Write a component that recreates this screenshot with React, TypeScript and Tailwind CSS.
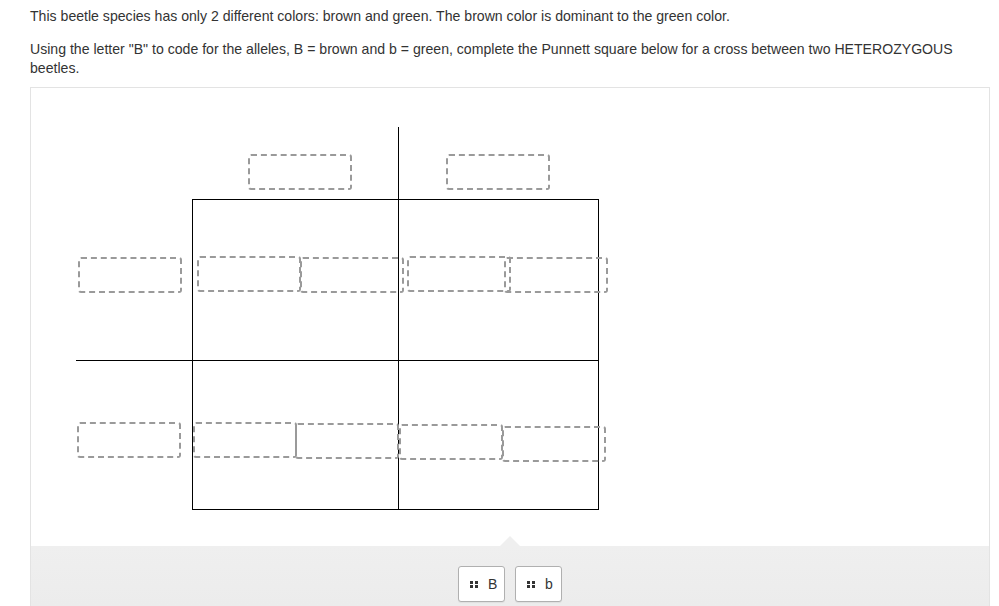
const dropZones = [
  // parent alleles (top)
  'left-[217px] top-[66px]',
  'left-[415px] top-[66px]',
  // row 1
  'left-[47px] top-[169px]',
  'left-[166px] top-[168px]',
  'left-[269px] top-[169px]',
  'left-[376px] top-[168px]',
  'left-[473px] top-[169px]',
  // row 2
  'left-[46px] top-[334px]',
  'left-[162px] top-[334px]',
  'left-[264px] top-[335px]',
  'left-[368px] top-[336px]',
  'left-[471px] top-[338px]',
]

const tokens = ['B', 'b']

function Grip() {
  return (
    <svg width="8" height="7" viewBox="0 0 8 7" className="shrink-0">
      <rect x="0" y="0" width="3" height="3" fill="#333" />
      <rect x="5" y="0" width="3" height="3" fill="#333" />
      <rect x="0" y="4" width="3" height="3" fill="#333" />
      <rect x="5" y="4" width="3" height="3" fill="#333" />
    </svg>
  )
}

export default function App() {
  return (
    <div
      className="w-[999px] h-[606px] overflow-hidden bg-white pl-[30px] pr-[9px] text-[14.1px] leading-[19px] text-[#333]"
      style={{ fontFamily: '"Liberation Sans", Arial, sans-serif' }}>

      {/* question */}
      <p className="pt-[7px]">
        This beetle species has only 2 different colors: brown and green. The brown color is dominant to the green color.
      </p>
      <p className="mt-[14px]">
        Using the letter "B" to code for the alleles, B = brown and b = green, complete the Punnett square below for a cross between two HETEROZYGOUS beetles.
      </p>

      {/* drag & drop canvas */}
      <div className="mt-[9px] border border-[#e3e3e3] border-b-0">
        <div className="relative h-[458px] bg-white">
          {/* punnett lines */}
          <div className="absolute left-[367px] top-[39px] w-px h-[382px] bg-black" />
          <div className="absolute left-[45px] top-[272px] w-[523px] h-px bg-black" />
          <div className="absolute left-[161px] top-[111px] w-[407px] h-[311px] border border-black" />

          {/* drop targets */}
          {dropZones.map((pos, i) => (
            <div
              key={i}
              className={`absolute ${pos} w-[104px] h-[36px] rounded-[3px] border-2 border-dashed border-[#9a9a9a]`}
            />
          ))}
        </div>

        {/* token tray */}
        <div className="relative h-[80px] bg-gradient-to-b from-[#efefef] to-[#ebebeb] pt-[20px]">
          <div className="absolute left-[469px] -top-[10px] w-0 h-0 border-l-[10px] border-r-[10px] border-b-[10px] border-l-transparent border-r-transparent border-b-[#efefef]" />
          <div className="flex justify-center gap-[10px]">
            {tokens.map(t => (
              <div
                key={t}
                className="flex items-center gap-[10px] w-[47px] h-[36px] pl-[11px] rounded-[3px] border border-[#b0b0b0] bg-white shadow-[0_1px_1px_rgba(0,0,0,0.06)] text-[14px]">
                <Grip />
                <span>{t}</span>
              </div>
            ))}
          </div>
        </div>
      </div>
    </div>
  )
}
